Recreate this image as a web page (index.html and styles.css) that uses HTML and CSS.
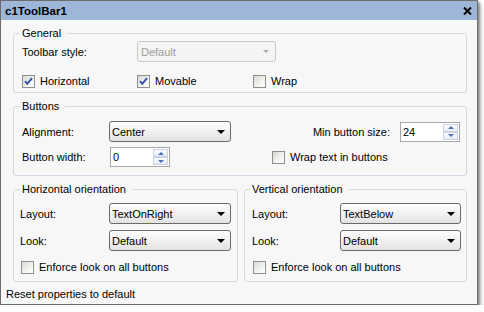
FILE: index.html
```html
<!DOCTYPE html>
<html>
<head>
<meta charset="utf-8">
<link rel="stylesheet" href="styles.css">
</head>
<body>
<div class="win">
  <div class="titlebar">
    <span class="title">c1ToolBar1</span>
    <svg class="close" width="9" height="8" viewBox="0 0 9 8"><path d="M1 0.5L8 7.5M8 0.5L1 7.5" stroke="#000" stroke-width="2"/></svg>
  </div>
  <div class="content">
    <fieldset class="grp general">
      <legend>General</legend>
      <div class="row gen-r1">
        <span class="lbl lbl-gen">Toolbar style:</span>
        <div class="combo disabled w-style"><span>Default</span><i class="arrow"></i></div>
      </div>
      <div class="row gen-r2">
        <label class="chk chk-a"><span class="box"><svg width="11" height="11" viewBox="0 0 11 11"><path d="M2 5.2L4.3 7.8L9 2.2" fill="none" stroke="#3552a8" stroke-width="2"/></svg></span>Horizontal</label>
        <label class="chk chk-b"><span class="box"><svg width="11" height="11" viewBox="0 0 11 11"><path d="M2 5.2L4.3 7.8L9 2.2" fill="none" stroke="#3552a8" stroke-width="2"/></svg></span>Movable</label>
        <label class="chk"><span class="box"></span>Wrap</label>
      </div>
    </fieldset>

    <fieldset class="grp buttons">
      <legend>Buttons</legend>
      <div class="btngrid">
        <span class="lbl">Alignment:</span>
        <div class="combo w-122"><span>Center</span><i class="arrow"></i></div>
        <span class="lbl lbl-min">Min button size:</span>
        <div class="spin"><span class="val">24</span><span class="spbtns"><span class="spb"><i class="up"></i></span><span class="spb"><i class="dn"></i></span></span></div>
        <span class="lbl">Button width:</span>
        <div class="spin spin-left"><span class="val">0</span><span class="spbtns"><span class="spb"><i class="up"></i></span><span class="spb"><i class="dn"></i></span></span></div>
        <label class="chk span2"><span class="box"></span>Wrap text in buttons</label>
      </div>
    </fieldset>

    <div class="orient">
      <fieldset class="grp ogrp horiz">
        <legend>Horizontal orientation</legend>
        <div class="row orow">
          <span class="lbl lbl-h">Layout:</span>
          <div class="combo w-122"><span>TextOnRight</span><i class="arrow"></i></div>
        </div>
        <div class="row orow orow2">
          <span class="lbl lbl-h">Look:</span>
          <div class="combo w-122"><span>Default</span><i class="arrow"></i></div>
        </div>
        <div class="row ochk">
          <label class="chk chk-o"><span class="box"></span>Enforce look on all buttons</label>
        </div>
      </fieldset>
      <fieldset class="grp ogrp vert">
        <legend>Vertical orientation</legend>
        <div class="row orow">
          <span class="lbl lbl-v">Layout:</span>
          <div class="combo w-121"><span>TextBelow</span><i class="arrow"></i></div>
        </div>
        <div class="row orow orow2">
          <span class="lbl lbl-v">Look:</span>
          <div class="combo w-121"><span>Default</span><i class="arrow"></i></div>
        </div>
        <div class="row ochk">
          <label class="chk chk-o"><span class="box"></span>Enforce look on all buttons</label>
        </div>
      </fieldset>
    </div>
  </div>
  <div class="status">Reset properties to default</div>
</div>
</body>
</html>
```

FILE: styles.css
```css
* { box-sizing: border-box; }
html, body { margin: 0; padding: 0; background: #ffffff; }
body { font-family: "Liberation Sans", Arial, sans-serif; font-size: 11px; color: #000; }

.win {
  width: 478px;
  height: 305px;
  border: 1px solid #6c6c6c;
  background: #f7f7f7;
  box-shadow: 2px 2px 2px rgba(0,0,0,0.35), 4px 4px 4px rgba(0,0,0,0.15);
  display: flex;
  flex-direction: column;
}

.titlebar {
  flex: none;
  height: 19px;
  background: #9eb6d7;
  display: flex;
  align-items: center;
  justify-content: space-between;
  padding: 0 5px 0 4px;
}
.title { font-weight: bold; font-size: 11.5px; }
.close { display: block; margin-top: 1px; }

.content {
  flex: 1;
  display: flex;
  flex-direction: column;
  padding: 0 10px 0 12px;
}

.grp {
  margin: 0;
  min-width: 0;
  border: 1px solid #d3dae6;
  border-radius: 3px;
  padding: 0 5px 0 8px;
}
.grp legend {
  padding: 0 6px 0 2px;
  margin-left: -2px;
  line-height: 13px;
}

.row { display: flex; align-items: center; }
.lbl { white-space: nowrap; }

/* General */
.general { margin-top: 7px; padding-top: 1px; padding-bottom: 1px; }
.gen-r1 { height: 21px; }
.gen-r2 { height: 20px; margin-top: 9px; }
.lbl-gen { width: 115px; flex: none; }
.w-style { width: 139px; }
.chk-a { width: 115px; }
.chk-b { width: 116px; }

/* Combo */
.combo {
  height: 21px;
  border: 1px solid #6a6a6a;
  border-radius: 3px;
  background: linear-gradient(#fefefe, #f1f1f1 50%, #e2e2e2);
  display: flex;
  align-items: center;
  justify-content: space-between;
  padding: 0 5px 0 2px;
  flex: none;
}
.combo .arrow {
  display: block;
  width: 0; height: 0;
  border-left: 4px solid transparent;
  border-right: 4px solid transparent;
  border-top: 4px solid #000;
}
.combo.disabled {
  border-color: #c9c9c9;
  background: #f4f4f4;
  color: #9c9c9c;
  padding-left: 3px;
  padding-right: 6px;
}
.combo.disabled .arrow {
  border-left-width: 3px;
  border-right-width: 3px;
  border-top: 3px solid #a9a9a9;
}
.w-122 { width: 122px; }
.w-121 { width: 121px; }

/* Checkbox */
.chk { display: flex; align-items: center; white-space: nowrap; }
.box {
  width: 13px; height: 13px;
  flex: none;
  border: 1px solid #8e8f8f;
  background: linear-gradient(135deg, #d9d9d3, #f7f7f5 70%, #ffffff);
  margin-right: 5px;
  display: flex;
  align-items: center;
  justify-content: center;
}

/* Buttons group */
.buttons { margin-top: 7px; padding-top: 8px; padding-bottom: 8px; }
.btngrid {
  display: grid;
  grid-template-columns: 87px 163px 128px 60px;
  grid-template-rows: 21px 20px;
  row-gap: 5px;
  align-items: center;
}
.lbl-min { justify-self: end; padding-right: 10px; }
.spin-left { margin-left: 1px; }
.span2 { grid-column: 3 / span 2; }

.spin {
  width: 60px;
  height: 20px;
  border: 1px solid #a7a6aa;
  background: #fff;
  display: flex;
  align-items: center;
  justify-content: space-between;
  padding: 1px;
}
.spin .val { padding-left: 1px; }
.spbtns {
  width: 15px;
  height: 16px;
  display: flex;
  flex-direction: column;
}
.spb {
  flex: 1;
  border: 1px solid #c9d3e4;
  background: linear-gradient(#fbfcfd, #e6ebf3);
  display: flex;
  align-items: center;
  justify-content: center;
}
.spb .up, .spb .dn {
  display: block;
  width: 0; height: 0;
  border-left: 3px solid transparent;
  border-right: 3px solid transparent;
}
.spb .up { border-bottom: 3px solid #4d6fb4; }
.spb .dn { border-top: 3px solid #4d6fb4; }

/* Orientation groups */
.orient { display: flex; gap: 6px; margin-top: 7px; }
.ogrp { padding: 7px 5px 4px 6px; }
.ogrp legend { margin-left: 0; }
.horiz { width: 225px; }
.vert { width: 223px; padding-left: 7px; }
.vert legend { margin-left: -2px; }
.orow { height: 21px; }
.orow2 { margin-top: 6px; }
.lbl-h { width: 89px; flex: none; }
.lbl-v { width: 88px; flex: none; }
.ochk { height: 20px; margin-top: 6px; }
.chk-o { margin-left: 1px; }

.status {
  flex: none;
  height: 21px;
  display: flex;
  align-items: center;
  padding-left: 5px;
}
```
